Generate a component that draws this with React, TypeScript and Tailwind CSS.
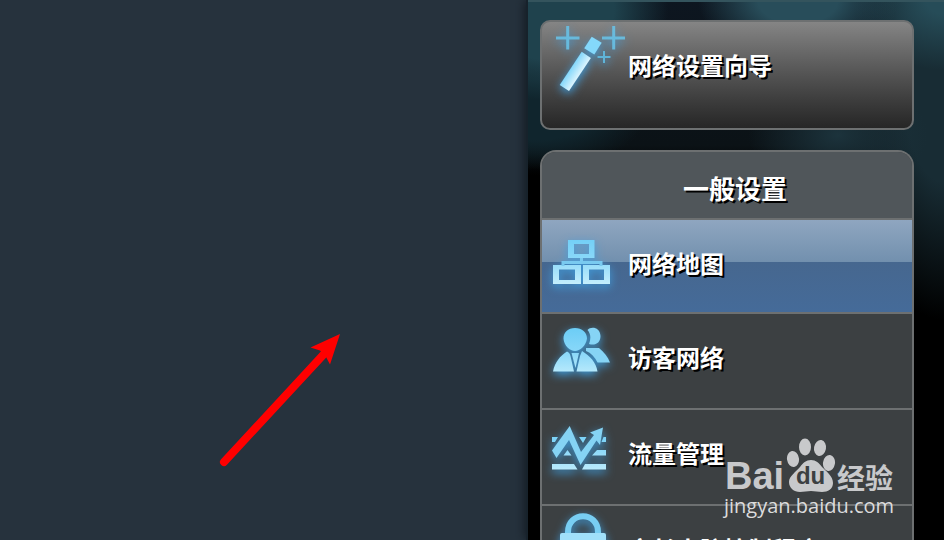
import type { ReactNode } from "react";

type MenuItem = {
    label: string;
    icon: ReactNode;
    active?: boolean;
};

function IconFrame({ children }: { children: ReactNode }) {
    return (
        <svg
            viewBox="0 0 86 92"
            aria-hidden="true"
            className="h-[92px] w-[86px] shrink-0 overflow-visible drop-shadow-[0_3px_5px_#3f9fe0]"
        >
            <defs>
                <linearGradient id="glow" gradientUnits="userSpaceOnUse" x1="0" y1="14" x2="0" y2="64">
                    <stop offset="0" stopColor="#6ccdf6" />
                    <stop offset="0.5" stopColor="#8ad8f9" />
                    <stop offset="1" stopColor="#c4eefc" />
                </linearGradient>
            </defs>
            {children}
        </svg>
    );
}

function WandIcon() {
    return (
        <IconFrame>
            <defs>
                <linearGradient id="stick" gradientUnits="userSpaceOnUse" x1="26" y1="46" x2="38" y2="54">
                    <stop offset="0" stopColor="#6fd0fa" />
                    <stop offset="1" stopColor="#e4f7fe" />
                </linearGradient>
            </defs>
            <path d="M49.7 14.7 59.7 20.7 52.3 32.5 42.2 26.3Z" fill="#84d8fb" />
            <path d="M39.7 29.7 48.9 36 27 69 17.7 63Z" fill="url(#stick)" />
            <path
                d="M14 16H37.500M25.700 4V27.500M60 16H83M71.700 4V27.500"
                stroke="#68c4ea"
                strokeWidth="3"
                strokeOpacity="0.85"
            />
            <path d="M55.5 35H68.5M62 29V41" stroke="#5fb4d8" strokeWidth="2" />
        </IconFrame>
    );
}

function NetworkMapIcon() {
    return (
        <IconFrame>
            <path
                fillRule="evenodd"
                fill="url(#glow)"
                d="M26 20H52.5V38H26ZM32 24V34H47V24ZM11 45H39V64H11ZM17 49.500V60H33V49.500ZM41 45H68V64H41ZM47 49.500V60H62V49.500Z"
            />
            <path d="M39.5 38V42.5M21 46V42.500H59V46" fill="none" stroke="#79caf0" strokeWidth="3" />
        </IconFrame>
    );
}

function GuestIcon() {
    return (
        <IconFrame>
            <path
                fill="#86d4f5"
                d="M45.500 16C49 12 58 13 58.500 22C58.500 29 53 32 47 30C49 25 49 20 45.500 16ZM44 34H57C62 38 66 43 68 48.500H55.500C53 43 49 39 44 37Z"
            />
            <path
                fill="url(#glow)"
                d="M33 14C40 14 45 18.500 45 24.500C44 32 38 37 33 37C28 37 22 32 21.500 24.500C21.500 18.500 26 14 33 14ZM25 37.500C27 38 28 40 28.500 42L32 57.500H11C13 48 18 42 25 37.500ZM40 37C48 42 54 48 55.500 57.500H34.500L38 42ZM29.500 39H37L33.500 54Z"
            />
        </IconFrame>
    );
}

function TrafficIcon() {
    return (
        <IconFrame>
            <path
                fill="url(#glow)"
                d="M10 54H32L35.500 59.500H10ZM43 54H64V59.500H40ZM55 40H64V45.500H50ZM21.500 45.500 25.500 40 29.500 45.500ZM10 27H16L13 32H10ZM37 27H44.500L41 33ZM61.500 27H64V32H59.500Z"
            />
            <path
                d="M10 40.500 27.700 16 39 42 52 25 48 22.500 61 17.500 58 35 54.500 30.500 38.500 55 27 30 14.500 48Z"
                fill="#85d3f4"
            />
        </IconFrame>
    );
}

function LockIcon() {
    return (
        <IconFrame>
            <path d="M26 28V26C26 5 56 5 56 26V28" fill="none" stroke="#78cef3" strokeWidth="6" />
            <rect x="18" y="27" width="46" height="34" rx="2" fill="#a0e0fa" />
        </IconFrame>
    );
}

const menuItems: MenuItem[] = [
    { label: "网络地图", icon: <NetworkMapIcon />, active: true },
    { label: "访客网络", icon: <GuestIcon /> },
    { label: "流量管理", icon: <TrafficIcon /> },
    { label: "家长电脑控制程序", icon: <LockIcon /> },
];

function Watermark() {
    return (
        <div className="absolute right-[51px] bottom-5 w-[168px] text-[#c8c9cb]">
            <div className="flex h-[50px] items-end justify-between">
                <span className="font-['Liberation_Sans'] text-[38px] leading-[32px] font-bold">Bai</span>
                <div className="relative h-[54px] w-[50px] shrink-0">
                    <svg viewBox="0 0 50 54" aria-hidden="true" className="h-[54px] w-[50px]" fill="currentColor">
                        <ellipse cx="7" cy="21" rx="6" ry="8" transform="rotate(-8 7 21)" />
                        <ellipse cx="19" cy="9" rx="6" ry="8.500" />
                        <ellipse cx="34" cy="10" rx="6" ry="8" transform="rotate(10 34 10)" />
                        <ellipse cx="43" cy="25" rx="6" ry="8" transform="rotate(8 43 25)" />
                        <path d="M25 22C30 22 33 25 36 29C40 33 47 38 47 45C47 51 42 54 36 54C32 54 29 53 25 53C21 53 18 54 14 54C8 54 3 50 3 44C3 38 10 34 14 29C17 25 20 22 25 22Z" />
                    </svg>
                    <span className="absolute inset-x-0 bottom-0 text-center font-['Liberation_Sans'] text-[24px] leading-8 font-bold text-[#3c4042]">
                        du
                    </span>
                </div>
                <span className="text-[28px] leading-[30px] font-bold">经验</span>
            </div>
            <div className="flex justify-center font-['Open_Sans'] text-[20px] leading-7 text-[#dcdcdd]">
                jingyan.baidu.com
            </div>
        </div>
    );
}

export default function App() {
    return (
        <div className="relative flex h-screen overflow-hidden bg-[#26323d] font-['Noto_Sans_CJK_SC',sans-serif]">
            <main className="relative flex-1">
                <svg
                    viewBox="0 0 124 136"
                    aria-hidden="true"
                    className="absolute top-[332px] left-[218px] h-[136px] w-[124px]"
                    fill="#ff0000"
                >
                    <path d="M6 130 106 22" stroke="#ff0000" strokeWidth="8" strokeLinecap="round" />
                    <path d="M122 2 92.500 15.500 102 18.500 107.500 24 112 32.500Z" />
                </svg>
            </main>

            <aside className="w-[418px] shrink-0 border-l-2 border-[#17222b] bg-black bg-[linear-gradient(#34545d_2px,transparent_2px),radial-gradient(ellipse_120px_90px_at_20px_10px,#1f424d_55%,transparent),radial-gradient(ellipse_100px_60px_at_270px_0px,#284d5a_40%,transparent),radial-gradient(ellipse_90px_70px_at_416px_0px,#264c58_20%,transparent),radial-gradient(ellipse_90px_60px_at_310px_135px,#1c333c,transparent),radial-gradient(ellipse_100px_230px_at_416px_90px,#182c34_40%,transparent),radial-gradient(ellipse_110px_60px_at_10px_110px,#10252d_50%,transparent),linear-gradient(#0d1620,#0b1216_145px,#000000_175px)] pt-5 pr-[30px] pl-3 text-white shadow-[-1px_0_10px_#111820]">
                <button
                    type="button"
                    className="flex h-[110px] w-full items-start rounded-[10px] border-2 border-[#6d7071] bg-linear-to-b from-[#858585] to-[#262626] text-left"
                >
                    <IconSlot>
                        <WandIcon />
                    </IconSlot>
                    <span className="text-[24px] leading-[86px] font-bold [text-shadow:2px_2px_0_#000]">
                        网络设置向导
                    </span>
                </button>

                <nav className="mt-5 overflow-hidden rounded-t-[16px] border-2 border-b-0 border-[#6d7071] bg-[#3c4042]">
                    <h2 className="h-[66px] bg-[#50565a] pt-1 pl-4 text-center text-[26px] leading-[64px] font-bold [text-shadow:2px_2px_0_#000]">
                        一般设置
                    </h2>
                    <ul>
                        {menuItems.map((item) => (
                            <li key={item.label} className="border-t-2 border-[#6d7071]">
                                <a
                                    href="#"
                                    className={
                                        item.active
                                            ? "flex h-[92px] items-start bg-[linear-gradient(#8fa6c0,#7290ae_42px,#46678f_42px,#456b99)]"
                                            : "flex h-[94px] items-start"
                                    }
                                >
                                    <IconSlot>{item.icon}</IconSlot>
                                    <span className="text-[24px] leading-[86px] font-bold whitespace-nowrap [text-shadow:2px_2px_0_#000]">
                                        {item.label}
                                    </span>
                                </a>
                            </li>
                        ))}
                    </ul>
                </nav>
            </aside>

            <Watermark />
        </div>
    );
}

function IconSlot({ children }: { children: ReactNode }) {
    return <span className="w-[86px] shrink-0">{children}</span>;
}
